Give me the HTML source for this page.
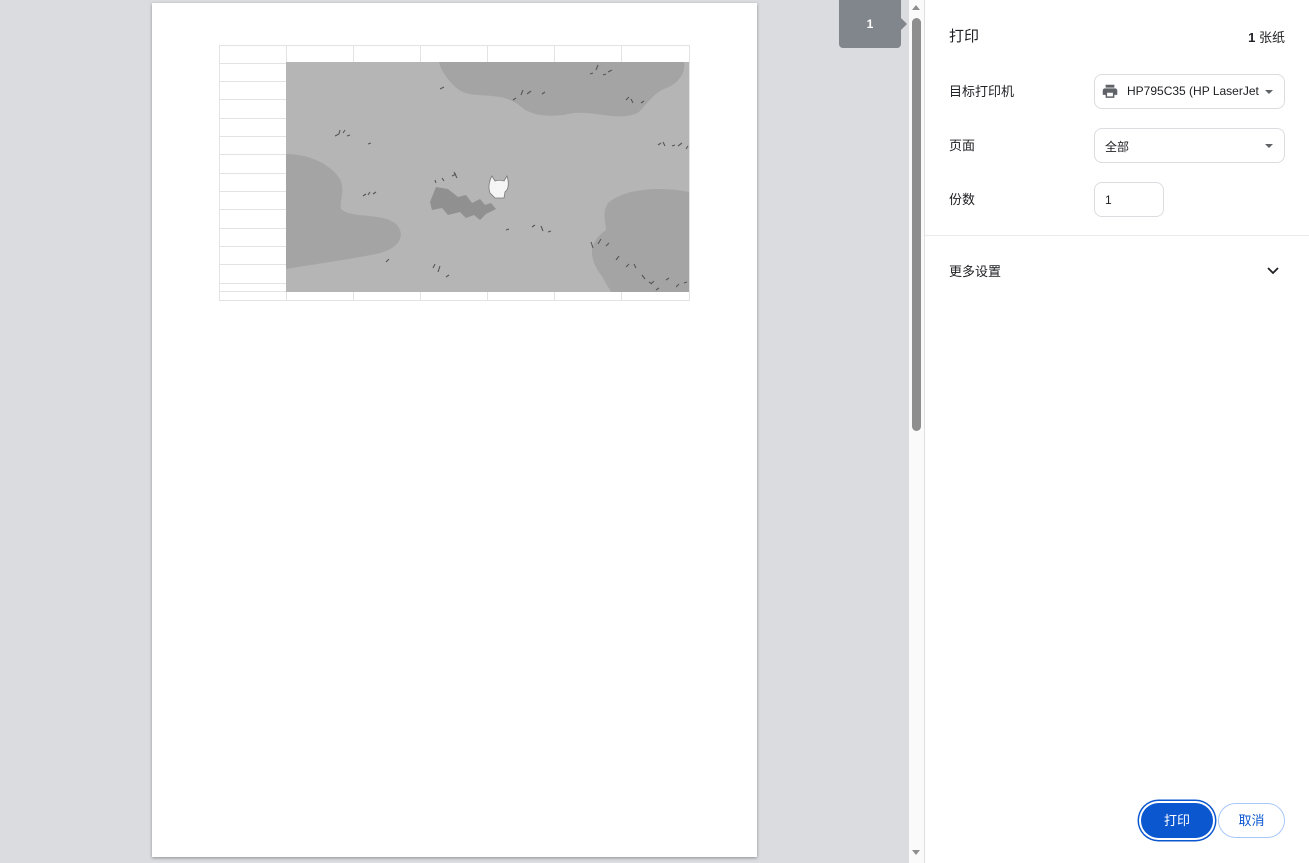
<!DOCTYPE html>
<html><head><meta charset="utf-8">
<style>
*{margin:0;padding:0;box-sizing:border-box}
body{width:1309px;height:863px;overflow:hidden;background:#dadce0;font-family:"Liberation Sans","Noto Sans CJK SC",sans-serif;position:relative;color:#202124}
.page{position:absolute;left:152px;top:3px;width:605px;height:854px;background:#fff;box-shadow:0 1px 3px rgba(0,0,0,.35)}
.tag{position:absolute;left:839px;top:0;width:62px;height:48px;background:#80868b;border-radius:0 0 4px 4px;color:#fff;font-size:12px;font-weight:bold;text-align:center;line-height:48px}
.tag:after{content:"";position:absolute;right:-6px;top:18px;border-left:6px solid #80868b;border-top:6px solid transparent;border-bottom:6px solid transparent}
.track{position:absolute;left:909px;top:0;width:15px;height:863px;background:#fafafa}
.thumb{position:absolute;left:912px;top:18px;width:9px;height:413px;background:#8e8e8e;border-radius:5px}
.panel{position:absolute;left:924px;top:0;width:385px;height:863px;background:#fff;border-left:1px solid #e0e0e0}
.lbl{position:absolute;left:24px;font-size:13px}
.sel{position:absolute;left:169px;width:191px;height:35px;border:1px solid #dadce0;border-radius:8px;font-size:12px}
.arrow{position:absolute;right:11px;top:15px;border-top:4px solid #5f6368;border-left:4px solid transparent;border-right:4px solid transparent}
.btn{position:absolute;top:802px;height:37px;border-radius:19px;font-size:13px;text-align:center;line-height:35px}
</style></head><body>
<div class="page">
<svg width="605" height="854" style="position:absolute;left:0;top:0">
<defs><filter id="n"><feTurbulence baseFrequency="0.9" numOctaves="1" seed="3"/><feColorMatrix values="0 0 0 0 0.5 0 0 0 0 0.5 0 0 0 0 0.5 0 0 0 0.08 0"/></filter></defs>
<g stroke="#e3e3e3" stroke-width="1" fill="none">
<rect x="67.5" y="42.5" width="470" height="255"/>
<path d="M134.5 42v255M201.5 42v255M268.5 42v255M335.5 42v255M402.5 42v255M469.5 42v255"/>
<path d="M67 60.5h470M67 78.5h67M67 96.5h67M67 115.5h67M67 133.5h67M67 151.5h67M67 170.5h67M67 188.5h67M67 206.5h67M67 225.5h67M67 243.5h67M67 261.5h67M67 280.5h67M67 288.5h470"/>
</g>
<svg x="134" y="59" width="403" height="230" viewBox="0 0 403 230">
<rect width="403" height="230" fill="#b5b5b5"/>
<path d="M153 0h245c2 10-5 20-15 25-15 5-20 15-30 25-20 12-50-5-75 3-20 2-35 0-45-10-20-15-45-5-60-15C165 22 155 10 153 0z" fill="#a4a4a4"/>
<path d="M0 92c20 0 40 8 50 20 12 12 3 25 5 35 10 10 40 3 55 15 10 10 5 25-20 30-25 5-60 10-90 15z" fill="#a4a4a4"/>
<path d="M403 130c-25-5-60-5-80 10-8 10-3 20-3 28-15 10-20 25-5 45 5 8 10 17 10 17h78z" fill="#a4a4a4"/>
<path d="M150 125l12 2 10 8 8-2 6 8 8-4 5 6 6-2 5 6-10 5-6 6-6-5-8 3-6-6-12 3-6-7-10 2-2-8z" fill="#909090"/>
<path d="M204 131c-2-5-1-12 2-17l3 5c3-1 6-1 9 0l3-5c2 6 2 13-2 16l-1 6h-9z" fill="#f6f6f6" stroke="#777" stroke-width=".8"/>
<g stroke="#555" stroke-width="1.1" fill="none">
<path d="M49 74l4-2M53 72l1-4M57 71l2-3M61 74l3-1M82 82l3-1M77 134l3-2M82 133l2-3M87 132l3-2M154 27l4-2M149 118l1 3M156 116l2 3M166 114l4-2M168 110l3 6M227 38l3-2M235 33l2-5M241 32l4-3M256 32l3-2M304 12l3-1M310 8l2-5M317 13l3-1M322 10l4-2M340 38l3-3M345 37l2 4M355 41l3-2M372 83l3-2M377 80l2 4M386 84l3-1M392 84l4-3M400 87l2-3M220 168l3-1M246 165l3-2M255 164l2 5M262 170l3-1M305 180l2 6M312 182l3-5M320 184l3-3M340 205l3-3M330 198l3-4M348 202l2 4M365 222l3-3M370 228l3-2M100 200l3-3M147 206l2-4M152 210l2-6M160 215l3-2M356 213l3 4M363 220l3 2M380 218l3-2M390 225l3-3M398 221l3-1"/>
</g>
<rect width="403" height="230" filter="url(#n)"/>
</svg>
</svg>
</div>
<div class="tag">1</div>
<div class="track"></div>
<div class="thumb"></div>
<div style="position:absolute;left:912px;top:5px;border-bottom:5px solid #8e8e8e;border-left:4px solid transparent;border-right:4px solid transparent"></div>
<div style="position:absolute;left:912px;top:850px;border-top:5px solid #8e8e8e;border-left:4px solid transparent;border-right:4px solid transparent"></div>
<div class="panel">
<div class="lbl" style="top:25px;font-size:15px">打印</div>
<div style="position:absolute;right:24px;top:27px;font-size:13px"><b>1</b> 张纸</div>
<div class="lbl" style="top:81px">目标打印机</div>
<div class="sel" style="top:74px">
<svg style="position:absolute;left:6px;top:9px" width="18" height="16" viewBox="0 0 24 22"><path fill="#5f6368" d="M19 6H5C3.3 6 2 7.3 2 9v6h4v4h12v-4h4V9c0-1.7-1.3-3-3-3zm-3 11H8v-5h8v5zM18 1H6v4h12z"/></svg>
<span style="position:absolute;left:32px;top:9px">HP795C35 (HP LaserJet</span><div class="arrow"></div></div>
<div class="lbl" style="top:135px">页面</div>
<div class="sel" style="top:128px"><span style="position:absolute;left:10px;top:9px">全部</span><div class="arrow"></div></div>
<div class="lbl" style="top:189px">份数</div>
<div class="sel" style="top:182px;width:70px"><span style="position:absolute;left:10px;top:10px;color:#202124">1</span></div>
<div style="position:absolute;left:0;top:235px;width:385px;height:1px;background:#e8eaed"></div>
<div class="lbl" style="top:261px">更多设置</div>
<svg style="position:absolute;left:341px;top:266px" width="14" height="10" viewBox="0 0 14 10"><path d="M2 2l5 5 5-5" stroke="#202124" stroke-width="1.8" fill="none"/></svg>
<div class="btn" style="left:216px;width:72px;background:#0b57d0;color:#fff;box-shadow:0 0 0 2px #fff,0 0 0 3.5px #0b57d0;top:803px;height:35px;line-height:35px">打印</div>
<div class="btn" style="left:293px;width:67px;border:1px solid #a8c7fa;color:#0b57d0;top:803px;height:35px;line-height:33px">取消</div>
</div>
</body></html>
